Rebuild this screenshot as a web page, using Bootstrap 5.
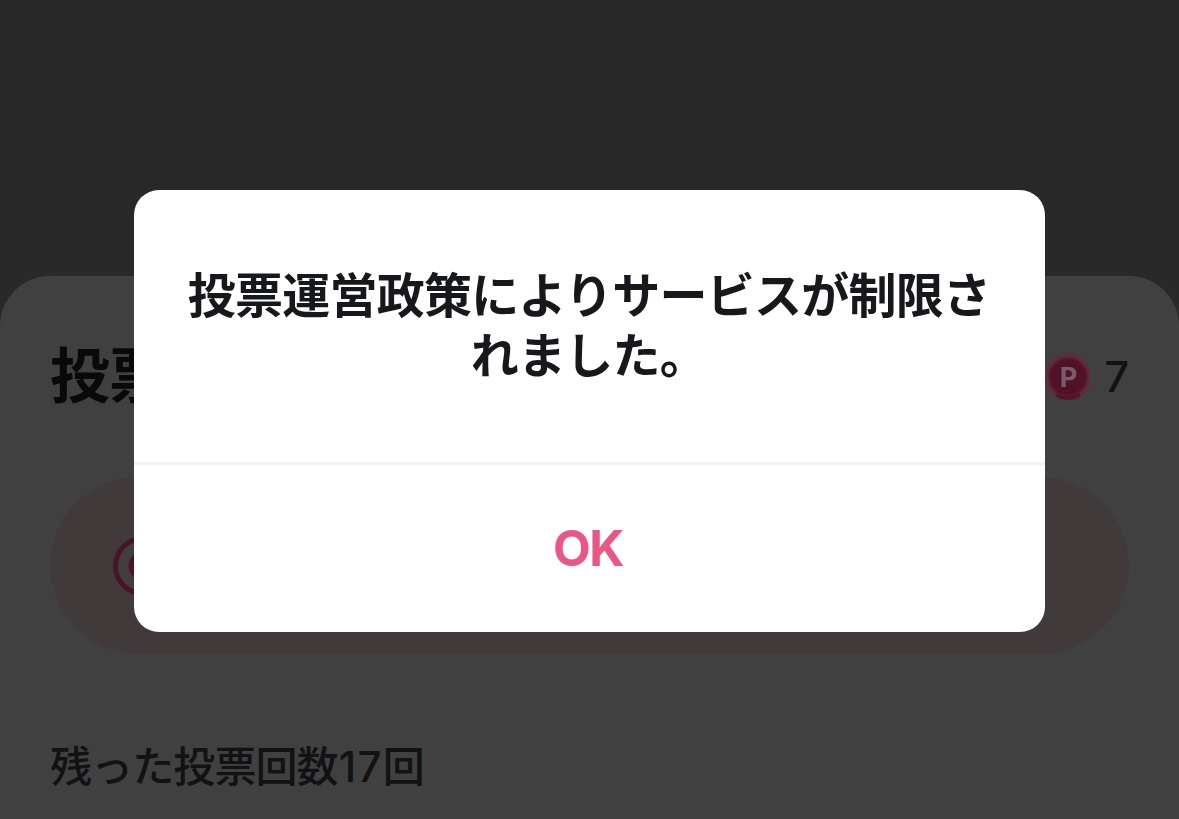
<!DOCTYPE html>
<html lang="ja">
<head>
<meta charset="utf-8">
<meta name="viewport" content="width=device-width, initial-scale=1">
<title>投票</title>
<link href="https://cdn.jsdelivr.net/npm/bootstrap@5.3.0/dist/css/bootstrap.min.css" rel="stylesheet">
<style>
  body { background: #292929; font-family: Inter, "Noto Sans CJK JP", sans-serif; }
  .screen { height: 819px; }
  .hero { width: 900px; height: 266px; margin-top: 10px; background: #282828; }
  .sheet { background: #404040; border-radius: 50px 50px 0 0; padding: 0 50px; }
  .sheet-head { height: 200px; }
  .sheet-title { font-size: 60px; line-height: 1; font-weight: 700; color: #090909; letter-spacing: -1px; }
  .points { font-size: 43px; line-height: 1; font-weight: 500; color: #121214; gap: 13px; padding-top: 1px; }
  .vote-pill { height: 177px; border-radius: 89px; background: #403a3b; padding-left: 63px; margin-top: 1px; }
  .remaining { font-size: 42px; line-height: 60px; font-weight: 500; color: #111213; letter-spacing: -.9px; margin-top: 83px; }
  .count { letter-spacing: 1.3px; padding-left: 1px; }
  .alert-dialog { width: 911px; max-width: none; margin: 190px 0 0 134px; }
  .alert-box { height: 442px; border-radius: 25px; }
  .alert-text { font-family: "Noto Sans CJK JP", sans-serif; font-size: 48px; line-height: 60px; font-weight: 700; letter-spacing: -.75px; color: #17181b; height: 272px; padding: 0 1px 9px 0; }
  .alert-foot { border-top: 3px solid #f2f2f2; }
  .alert-ok { font-size: 49px; font-weight: 700; color: #ea5784; line-height: 1; letter-spacing: -1.4px; padding: 0 3px 0 0; }
</style>
<script src="https://cdn.jsdelivr.net/npm/bootstrap@5.3.0/dist/js/bootstrap.bundle.min.js"></script>
</head>
<body class="overflow-hidden">
<main class="screen d-flex flex-column overflow-hidden">
  <div class="hero mx-auto flex-shrink-0"></div>
  <section class="sheet flex-grow-1">
    <header class="sheet-head d-flex align-items-center justify-content-between">
      <h1 class="sheet-title mb-0">投票</h1>
      <div class="points d-flex align-items-center">
        <svg width="46" height="46" viewBox="0 0 46 46" aria-hidden="true">
          <circle cx="23" cy="23" r="23" fill="#602a3b"/>
          <path d="M10 42A23 23 0 0 0 36 42L32 37H14Z" fill="#56142b"/>
          <circle cx="23" cy="23" r="19.5" fill="#58192f"/>
          <circle cx="23" cy="23" r="17.5" fill="#501229"/>
          <text x="23.5" y="32.5" text-anchor="middle" font-size="27" font-weight="700" fill="#7a5d66">P</text>
        </svg>
        <span>7</span>
      </div>
    </header>
    <div class="vote-pill d-flex align-items-center">
      <svg width="60" height="60" viewBox="0 0 60 60" aria-hidden="true">
        <circle cx="30" cy="30" r="27.5" fill="#403e3e" stroke="#48142a" stroke-width="5"/>
        <circle cx="30" cy="30" r="14.5" fill="#48142a"/>
      </svg>
    </div>
    <p class="remaining mb-0">残った投票回数<span class="count">17</span>回</p>
  </section>
</main>
<div class="modal d-block" tabindex="-1" role="dialog" aria-modal="true">
  <div class="modal-dialog alert-dialog">
    <div class="modal-content alert-box border-0 bg-white overflow-hidden">
      <div class="alert-text d-flex align-items-center justify-content-center text-center"><div>投票運営政策によりサービスが制限さ<br>れました。</div></div>
      <div class="alert-foot flex-grow-1 d-flex">
        <button type="button" class="btn alert-ok flex-grow-1 border-0">OK</button>
      </div>
    </div>
  </div>
</div>
</body>
</html>
